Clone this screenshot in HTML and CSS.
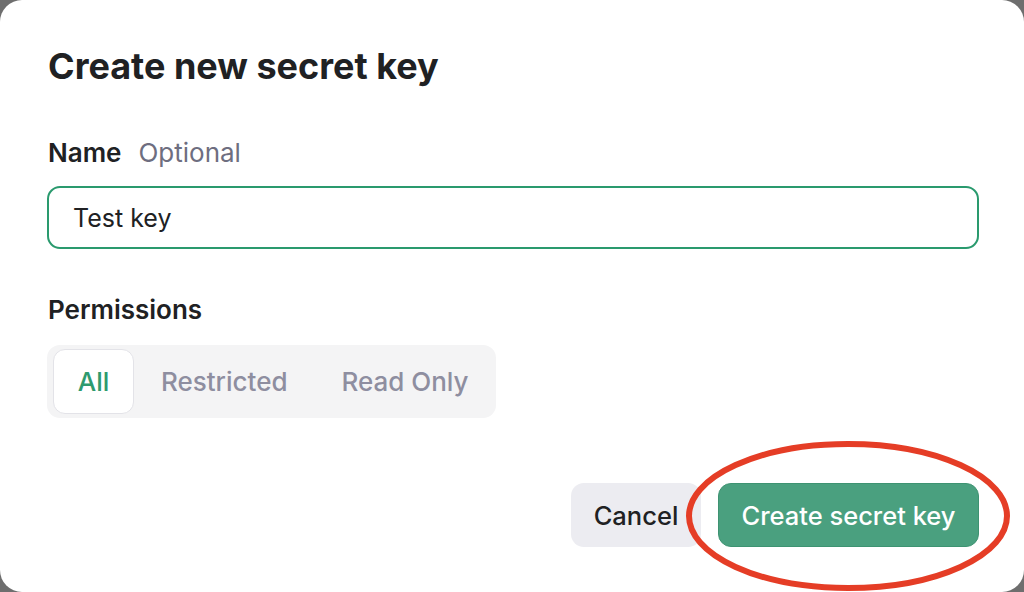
FILE: index.html
```html
<!DOCTYPE html>
<html>
<head>
<meta charset="utf-8">
<link rel="stylesheet" href="styles.css">
</head>
<body>
<div class="dialog">
  <h1 class="title">Create new secret key</h1>
  <div class="field">
    <div class="label"><span class="label-main">Name</span><span class="label-opt">Optional</span></div>
    <div class="input">Test key</div>
  </div>
  <div class="field perms">
    <div class="label"><span class="label-main">Permissions</span></div>
    <div class="segmented">
      <div class="seg seg-active">All</div>
      <div class="seg">Restricted</div>
      <div class="seg">Read Only</div>
    </div>
  </div>
  <div class="actions">
    <div class="btn btn-cancel">Cancel</div>
    <div class="btn btn-primary">Create secret key</div>
  </div>
  <svg class="circle" width="330" height="156" viewBox="0 0 330 156">
    <ellipse cx="165" cy="78" rx="159" ry="72" fill="none" stroke="#e53d26" stroke-width="6"/>
  </svg>
</div>
</body>
</html>
```
FILE: styles.css
```css
html, body {
  margin: 0;
  padding: 0;
  width: 1024px;
  height: 592px;
  background: #6e6e6e;
  overflow: hidden;
}
.dialog {
  position: relative;
  width: 1024px;
  height: 592px;
  box-sizing: border-box;
  background: #ffffff;
  border-radius: 22px;
  padding: 44px 45px 0 48px;
  font-family: Inter, "Noto Sans", sans-serif;
  color: #202123;
}
.title {
  margin: 0;
  font-size: 36px;
  font-weight: 700;
  letter-spacing: 0;
  line-height: 44px;
}
.field {
  margin-top: 49px;
}
.label {
  display: flex;
  align-items: baseline;
  gap: 17px;
  font-size: 26px;
  line-height: 32px;
}
.label-main {
  font-weight: 600;
  color: #202123;
}
.label-opt {
  font-weight: 400;
  color: #6e6e80;
}
.input {
  margin-top: 17px;
  margin-left: -1px;
  height: 63px;
  box-sizing: border-box;
  border: 2.5px solid #2a9a6e;
  border-radius: 13px;
  padding: 0 24px;
  display: flex;
  align-items: center;
  font-size: 25px;
  color: #202123;
}
.perms {
  margin-top: 45px;
}
.segmented {
  margin-top: 19px;
  margin-left: -1px;
  display: inline-flex;
  align-items: center;
  background: #f4f4f5;
  border-radius: 13px;
  padding: 4px 0 4px 6px;
  height: 73px;
  box-sizing: border-box;
}
.seg {
  font-size: 26px;
  font-weight: 500;
  color: #8e8ea0;
  padding: 0 27px;
  height: 65px;
  display: flex;
  align-items: center;
  justify-content: center;
}
.seg-active {
  width: 81px;
  padding: 0;
  background: #ffffff;
  border: 1.5px solid #e3e3e8;
  border-radius: 12px;
  color: #2e9a6e;
  box-sizing: border-box;
}
.actions {
  margin-top: 65px;
  display: flex;
  justify-content: flex-end;
  gap: 17px;
}
.btn {
  height: 64px;
  border-radius: 13px;
  display: flex;
  align-items: center;
  justify-content: center;
  font-size: 25.5px;
  font-weight: 500;
  box-sizing: border-box;
}
.btn-cancel {
  width: 130px;
  background: #ececf1;
  color: #202123;
}
.btn-primary {
  width: 261px;
  background: #4aa07f;
  color: #ffffff;
  border: 1px solid #3e9372;
}
.circle {
  position: absolute;
  left: 683px;
  top: 438px;
}
```
